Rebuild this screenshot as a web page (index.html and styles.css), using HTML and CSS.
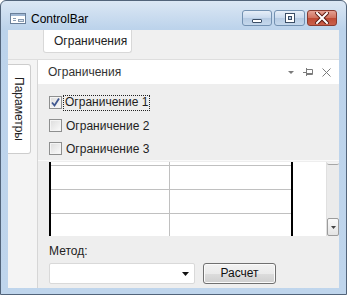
FILE: index.html
```html
<!DOCTYPE html>
<html lang="ru">
<head>
  <meta charset="UTF-8">
  <title>ControlBar</title>
  <link rel="stylesheet" href="styles.css">
</head>
<body>

<div class="window">
  <div class="titlebar">
    <svg class="app-icon" width="16" height="11" viewBox="0 0 16 11">
      <rect x="0.5" y="0.5" width="15" height="10" fill="#fff" stroke="#6a7f99"/>
      <rect x="1" y="1" width="14" height="2" fill="#9fb6d2"/>
      <line x1="3" y1="5.5" x2="6" y2="5.5" stroke="#8a9cb2"/>
      <line x1="3" y1="7.5" x2="6" y2="7.5" stroke="#8a9cb2"/>
      <rect x="8.5" y="6.5" width="5" height="2" fill="#dde6f0" stroke="#8a9cb2"/>
    </svg>
    <span class="title">ControlBar</span>
    <div class="caption-btns">
      <div class="cbtn">
        <svg width="12" height="6" viewBox="0 0 12 6"><rect x="1.5" y="1.5" width="9" height="3" rx="0.5" fill="#fff" stroke="#3b4e66"/></svg>
      </div>
      <div class="cbtn wide">
        <svg width="12" height="11" viewBox="0 0 12 11"><rect x="1.5" y="0.5" width="9" height="9" fill="#fff" stroke="#3b4e66"/><rect x="4.5" y="3.5" width="3" height="3" fill="#b9cde4" stroke="#3b4e66"/></svg>
      </div>
      <div class="cbtn close">
        <svg width="14" height="12" viewBox="0 0 14 12"><path d="M2 1 L12 11 M12 1 L2 11" stroke="#5a1a12" stroke-width="4" stroke-linecap="square"/><path d="M2 1 L12 11 M12 1 L2 11" stroke="#fff" stroke-width="2" stroke-linecap="square"/></svg>
      </div>
    </div>
  </div>

  <div class="client">
    <div class="tabstrip">
      <div class="top-tab">Ограничения</div>
    </div>

    <div class="dock">
      <div class="side">
        <div class="side-tab">Параметры</div>
      </div>

      <div class="panel">
        <div class="panel-head">
          <span>Ограничения</span>
          <div class="head-icons">
            <svg width="6" height="4" viewBox="0 0 6 4"><path d="M0 0 H6 L3 3 Z" fill="#7b7b7b"/></svg>
            <svg width="10" height="8" viewBox="0 0 10 8"><path d="M0 4.5 H3 M3.5 0 V8 M3.5 1.5 H9.5 V6.5 H3.5 M3.5 5.5 H9" stroke="#7b7b7b" fill="none"/></svg>
            <svg width="9" height="9" viewBox="0 0 9 9"><path d="M0.5 0.5 L8.5 8.5 M8.5 0.5 L0.5 8.5" stroke="#7b7b7b"/></svg>
          </div>
        </div>

        <div class="checks">
          <label class="check-row">
            <span class="box">
              <svg width="11" height="11" viewBox="0 0 11 11"><path d="M2 5.5 L4.5 8.5 L9 1.5" stroke="#3f5790" stroke-width="1.8" fill="none"/></svg>
            </span>
            <span class="focus">Ограничение 1</span>
          </label>
          <label class="check-row">
            <span class="box"></span>
            <span class="text">Ограничение 2</span>
          </label>
          <label class="check-row">
            <span class="box"></span>
            <span class="text">Ограничение 3</span>
          </label>
        </div>

        <div class="grid-wrap">
          <div class="cells">
            <div class="row r-top"><div class="cell"></div><div class="cell"></div></div>
            <div class="row"><div class="cell"></div><div class="cell"></div></div>
            <div class="row"><div class="cell"></div><div class="cell"></div></div>
            <div class="row r-last"><div class="cell"></div><div class="cell"></div></div>
          </div>
          <div class="grid-rest"></div>
          <div class="vscroll">
            <div class="scroll-cap"></div>
            <div class="scroll-down">
              <svg width="5" height="3" viewBox="0 0 5 3"><path d="M0 0 H5 L2.5 3 Z" fill="#444"/></svg>
            </div>
          </div>
        </div>

        <div class="method-label">Метод:</div>
        <div class="method-row">
          <div class="combo">
            <svg width="7" height="4" viewBox="0 0 7 4"><path d="M0 0 H7 L3.5 4 Z" fill="#111"/></svg>
          </div>
          <div class="btn">Расчет</div>
        </div>
      </div>
    </div>
  </div>
</div>

</body>
</html>
```

FILE: styles.css
```css
* { box-sizing: border-box; }
body { margin: 0; font-family: "Liberation Sans", Arial, sans-serif; font-size: 12px; color: #1e1e1e; }

.window {
  width: 347px;
  height: 295px;
  border: 1px solid #52647a;
  border-radius: 6px 6px 0 0;
  background: linear-gradient(#dbe7f4, #bcd3eb 28px, #bfd5ec);
  display: flex;
  flex-direction: column;
}

/* title bar */
.titlebar { height: 29px; flex-shrink: 0; display: flex; align-items: flex-start; padding-left: 9px; }
.app-icon { margin-top: 12px; }
.title { margin: 11px 0 0 5px; font-size: 12px; color: #000; }
.caption-btns { margin: 9px 9px 0 auto; display: flex; gap: 2px; }
.cbtn {
  width: 30px;
  height: 16px;
  border: 1px solid #7391b1;
  border-radius: 3px;
  background: linear-gradient(#e6eef8, #c9daee 50%, #b6cbe3 51%, #c5d8ec);
  display: flex;
  align-items: center;
  justify-content: center;
}
.cbtn.wide { width: 31px; }
.cbtn svg { display: block; }
.cbtn:first-child svg { margin-top: 6px; }
.cbtn.close {
  border-color: #8a3a2e;
  background: linear-gradient(#e5a193, #d0705c 50%, #bf4a33 51%, #c9604b);
}

/* client area */
.client {
  margin: 0 7px;
  height: 258px;
  flex-shrink: 0;
  background: #f0f0f0;
  display: flex;
  flex-direction: column;
}

.tabstrip { height: 29px; flex-shrink: 0; padding-left: 35px; }
.top-tab {
  width: 89px;
  height: 23px;
  background: #fff;
  border: 1px solid #d8d8d8;
  border-top: none;
  border-radius: 0 0 3px 3px;
  padding: 4px 0 0 10px;
  color: #222;
}

.dock { flex: 1; display: flex; border-top: 1px solid #dedede; }

.side { width: 30px; flex-shrink: 0; background: #f4f4f4; border-right: 1px solid #d6d6d6; padding-top: 4px; }
.side-tab {
  width: 23px;
  height: 90px;
  background: #fff;
  border: 1px solid #cdcdcd;
  border-left: none;
  border-radius: 0 3px 3px 0;
  writing-mode: vertical-rl;
  display: flex;
  align-items: center;
  justify-content: center;
  color: #222;
}

.panel { flex: 1; background: #eeeeee; display: flex; flex-direction: column; }
.panel > * { flex-shrink: 0; }

.panel-head {
  height: 24px;
  background: #fff;
  display: flex;
  align-items: center;
  padding: 0 8px 0 10px;
  color: #333;
}
.head-icons { margin-left: auto; display: flex; align-items: center; gap: 9px; }
.head-icons svg { display: block; }
.head-icons svg:first-child { margin-top: 1px; }

.checks { padding: 7px 0 0 11px; height: 76px; }
.check-row { height: 23px; display: flex; align-items: center; }
.box {
  width: 13px;
  height: 13px;
  border: 1px solid #8e8f8f;
  background: linear-gradient(135deg, #dcdcdc, #fbfbfb);
  box-shadow: inset 0 0 0 1px #f4f4f4;
  display: flex;
  align-items: center;
  justify-content: center;
}
.box svg { display: block; }
.focus { margin-left: 1px; border: 1px dotted #222; padding: 0 1px 1px 1px; line-height: 13px; }
.text { margin-left: 2px; padding: 1px 2px; }

.grid-wrap {
  height: 77px;
  border-top: 1px solid #fafafa;
  padding: 1px 0 0 11px;
  display: flex;
}
.cells {
  width: 244px;
  height: 74px;
  background: #fff;
  border-left: 2px solid #000;
  border-right: 2px solid #000;
}
.row { display: flex; height: 24px; border-bottom: 1px solid #c0c0c0; }
.row.r-top { height: 4px; }
.row.r-last { height: 22px; border-bottom: none; }
.cell { width: 119px; border-right: 1px solid #c0c0c0; }
.cell + .cell { flex: 1; border-right: none; }
.grid-rest { width: 33px; height: 74px; background: #fff; }
.vscroll {
  width: 13px;
  height: 74px;
  background: #ebebeb;
  border-left: 1px solid #e0e0e0;
  display: flex;
  flex-direction: column;
}
.scroll-cap { height: 3px; border-bottom: 1px solid #a6a6a6; border-radius: 0 0 2px 2px; background: #f2f2f2; }
.scroll-down {
  margin-top: auto;
  height: 18px;
  border: 1px solid #9c9c9c;
  border-radius: 2px;
  background: linear-gradient(#fafafa, #e4e4e4);
  display: flex;
  align-items: center;
  justify-content: center;
}
.scroll-down svg { display: block; }

.method-label { margin: 7px 0 0 11px; height: 19px; color: #222; }
.method-row { display: flex; gap: 8px; padding-left: 11px; }
.combo {
  width: 146px;
  height: 21px;
  background: #fff;
  border: 1px solid #d9d9d9;
  border-radius: 2px;
  display: flex;
  align-items: center;
  justify-content: flex-end;
  padding-right: 5px;
}
.combo svg { display: block; }
.btn {
  width: 73px;
  height: 21px;
  border: 1px solid #707070;
  border-radius: 3px;
  background: linear-gradient(#f2f2f2, #ebebeb 50%, #dddddd 51%, #cfcfcf);
  box-shadow: inset 0 0 0 1px #fbfbfb;
  text-align: center;
  line-height: 19px;
  color: #111;
}
```
